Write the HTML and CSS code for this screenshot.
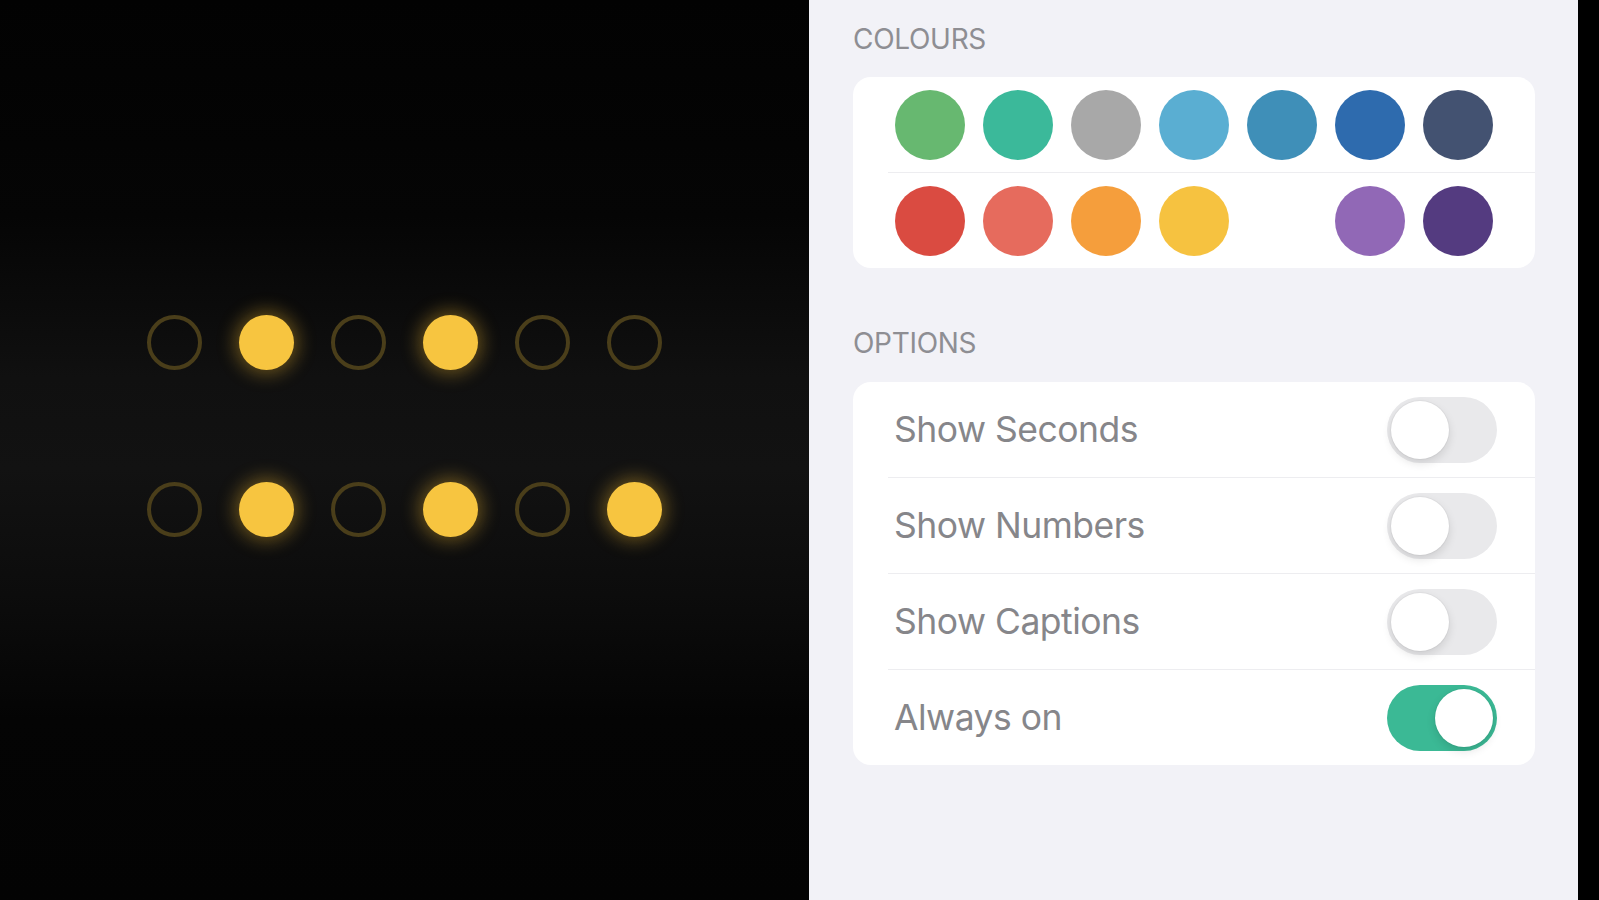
FILE: index.html
```html
<!DOCTYPE html>
<html lang="en">
<head>
    <meta charset="UTF-8">
    <meta name="viewport" content="width=device-width, initial-scale=1.0">
    <title>Binary Clock Settings</title>
    <link rel="stylesheet" href="styles.css">
</head>
<body>
    <div class="screen">
        <!-- Horloge binaire -->
        <div class="clock-pane">
            <div class="dot-row">
                <span class="dot"></span>
                <span class="dot on"></span>
                <span class="dot"></span>
                <span class="dot on"></span>
                <span class="dot"></span>
                <span class="dot"></span>
            </div>
            <div class="dot-row">
                <span class="dot"></span>
                <span class="dot on"></span>
                <span class="dot"></span>
                <span class="dot on"></span>
                <span class="dot"></span>
                <span class="dot on"></span>
            </div>
        </div>

        <!-- Réglages -->
        <div class="settings">
            <h3 class="section-title">Colours</h3>
            <div class="card">
                <div class="swatch-row">
                    <span class="swatch green"></span>
                    <span class="swatch teal"></span>
                    <span class="swatch grey"></span>
                    <span class="swatch sky"></span>
                    <span class="swatch ocean"></span>
                    <span class="swatch blue"></span>
                    <span class="swatch navy"></span>
                </div>
                <div class="divider"></div>
                <div class="swatch-row">
                    <span class="swatch red"></span>
                    <span class="swatch salmon"></span>
                    <span class="swatch orange"></span>
                    <span class="swatch yellow"></span>
                    <span class="swatch white"></span>
                    <span class="swatch purple"></span>
                    <span class="swatch plum"></span>
                </div>
            </div>

            <h3 class="section-title options-title">Options</h3>
            <div class="card">
                <div class="option">
                    <span>Show Seconds</span>
                    <span class="toggle"></span>
                </div>
                <div class="divider"></div>
                <div class="option">
                    <span>Show Numbers</span>
                    <span class="toggle"></span>
                </div>
                <div class="divider"></div>
                <div class="option">
                    <span>Show Captions</span>
                    <span class="toggle"></span>
                </div>
                <div class="divider"></div>
                <div class="option">
                    <span>Always on</span>
                    <span class="toggle checked"></span>
                </div>
            </div>
        </div>

        <div class="edge"></div>
    </div>
</body>
</html>
```

FILE: styles.css
```css
/* Base */
body, html {
    margin: 0;
    padding: 0;
    height: 100%;
    background-color: #000;
    font-family: Inter, "Noto Sans", sans-serif;
}

.screen {
    display: flex;
    height: 900px;
    overflow: hidden;
}

/* Horloge */
.clock-pane {
    width: 809px;
    flex-shrink: 0;
    display: flex;
    flex-direction: column;
    justify-content: center;
    align-items: center;
    gap: 112px;
    padding-bottom: 48px;
    box-sizing: border-box;
    background: linear-gradient(180deg, #020202 0%, #050505 24%, #101010 42%, #121212 52%, #0c0c0c 66%, #040404 80%, #030303 100%);
}

.dot-row {
    display: flex;
    gap: 37px;
}

.dot {
    width: 55px;
    height: 55px;
    border-radius: 50%;
    border: 4px solid #4a3e1a;
    box-sizing: border-box;
}

.dot.on {
    border: none;
    background-color: #f7c540;
    box-shadow: 0 0 18px 4px rgba(247, 190, 50, 0.38);
}

/* Réglages */
.settings {
    width: 769px;
    flex-shrink: 0;
    background-color: #f2f2f7;
    padding: 22px 43px 0 44px;
    box-sizing: border-box;
}

.section-title {
    margin: 0 0 21px;
    font-size: 28px;
    line-height: 34px;
    font-weight: 400;
    text-transform: uppercase;
    color: #8e8e93;
    letter-spacing: -0.3px;
}

.options-title {
    margin-top: 58px;
    margin-bottom: 22px;
}

.card {
    background-color: #ffffff;
    border-radius: 18px;
    overflow: hidden;
}

.divider {
    height: 1px;
    margin-left: 35px;
    background-color: #ededf0;
}

.swatch-row {
    height: 95px;
    display: flex;
    justify-content: center;
    align-items: center;
    gap: 18px;
}

.swatch {
    width: 70px;
    height: 70px;
    border-radius: 50%;
}

.green  { background-color: #67b870; }
.teal   { background-color: #3bb99a; }
.grey   { background-color: #a8a8a8; }
.sky    { background-color: #5aaed2; }
.ocean  { background-color: #3f8fb8; }
.blue   { background-color: #2e6bae; }
.navy   { background-color: #435271; }
.red    { background-color: #da4b41; }
.salmon { background-color: #e66b5d; }
.orange { background-color: #f59e3c; }
.yellow { background-color: #f6c240; }
.white  { background-color: #ffffff; }
.purple { background-color: #9168b6; }
.plum   { background-color: #543b80; }

.option {
    height: 95px;
    display: flex;
    align-items: center;
    justify-content: space-between;
    padding: 0 38px 0 41px;
    font-size: 35.5px;
    color: #86868a;
    letter-spacing: -0.5px;
}

/* Interrupteurs */
.toggle {
    position: relative;
    width: 110px;
    height: 66px;
    border-radius: 33px;
    background-color: #e9e9eb;
}

.toggle::after {
    content: "";
    position: absolute;
    top: 4px;
    left: 4px;
    width: 58px;
    height: 58px;
    border-radius: 50%;
    background-color: #ffffff;
    box-shadow: 0 4px 10px rgba(0, 0, 0, 0.12), 0 0 0 1px rgba(0, 0, 0, 0.03);
}

.toggle.checked {
    background-color: #3bb995;
}

.toggle.checked::after {
    left: 48px;
}

.edge {
    flex: 1;
    background-color: #000;
}
```
